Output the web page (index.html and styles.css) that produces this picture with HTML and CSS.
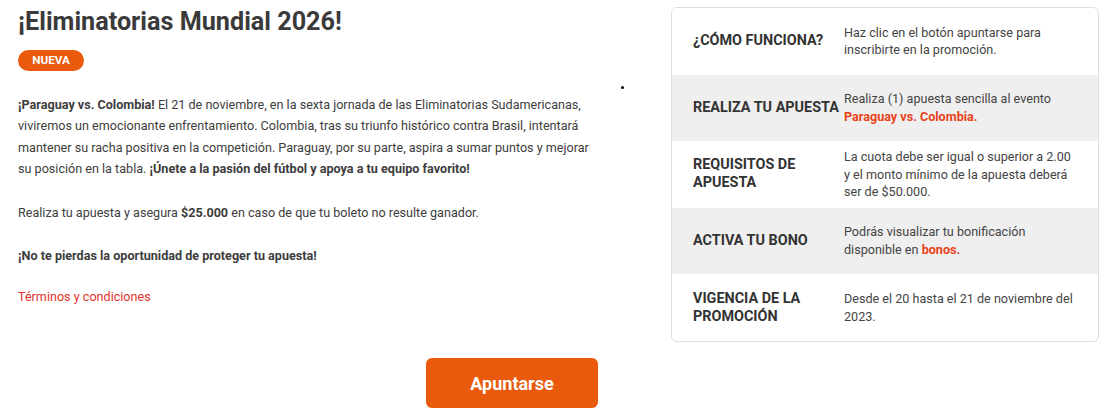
FILE: index.html
```html
<!DOCTYPE html>
<html lang="es">
<head>
<meta charset="utf-8">
<title>¡Eliminatorias Mundial 2026!</title>
<link rel="stylesheet" href="styles.css">
</head>
<body>
<div class="page">
  <div class="top">
    <section class="main">
      <h1 class="title">¡Eliminatorias Mundial 2026!</h1>
      <span class="badge">NUEVA</span>
      <p class="text first"><strong>¡Paraguay vs. Colombia!</strong> El 21 de noviembre, en la sexta jornada de las Eliminatorias Sudamericanas, viviremos un emocionante enfrentamiento. Colombia, tras su triunfo histórico contra Brasil, intentará mantener su racha positiva en la competición. Paraguay, por su parte, aspira a sumar puntos y mejorar su posición en la tabla. <strong>¡Únete a la pasión del fútbol y apoya a tu equipo favorito!</strong></p>
      <p class="text">Realiza tu apuesta y asegura <strong>$25.000</strong> en caso de que tu boleto no resulte ganador.</p>
      <p class="text"><strong>¡No te pierdas la oportunidad de proteger tu apuesta!</strong></p>
      <a class="terms" href="#">Términos y condiciones</a>
    </section>
    <div class="dot-col"><span class="dot"></span></div>
    <aside class="card">
      <div class="row">
        <div class="label">¿Cómo funciona?</div>
        <div class="value">Haz clic en el botón apuntarse para inscribirte en la promoción.</div>
      </div>
      <div class="row alt">
        <div class="label">Realiza tu apuesta</div>
        <div class="value">Realiza (1) apuesta sencilla al evento <strong class="hl">Paraguay vs. Colombia.</strong></div>
      </div>
      <div class="row">
        <div class="label">Requisitos de apuesta</div>
        <div class="value">La cuota debe ser igual o superior a 2.00 y el monto mínimo de la apuesta deberá ser de $50.000.</div>
      </div>
      <div class="row alt">
        <div class="label">Activa tu bono</div>
        <div class="value">Podrás visualizar tu bonificación disponible en <strong class="hl">bonos.</strong></div>
      </div>
      <div class="row">
        <div class="label">Vigencia de la promoción</div>
        <div class="value">Desde el 20 hasta el 21 de noviembre del 2023.</div>
      </div>
    </aside>
  </div>
  <div class="actions">
    <button class="cta" type="button">Apuntarse</button>
  </div>
</div>
</body>
</html>
```

FILE: styles.css
```css
* { box-sizing: border-box; }
html, body { margin: 0; padding: 0; background: #fff; }
body {
  font-family: Roboto, "Liberation Sans", Arial, sans-serif;
  color: #3d3d3d;
}
.page { width: 1115px; }
.top {
  display: flex;
  align-items: flex-start;
  padding-top: 7px;
}
.main {
  width: 582px;
  margin-left: 18px;
}
.title {
  margin: 0;
  font-size: 25.2px;
  line-height: 30px;
  font-weight: 700;
  color: #3a3a3a;
}
.badge {
  display: inline-block;
  margin-top: 13px;
  width: 66px;
  height: 21px;
  border-radius: 11px;
  background: #e95a0c;
  color: #fff;
  font-size: 11.7px;
  font-weight: 700;
  line-height: 21px;
  text-align: center;
}
.text {
  margin: 22px 0 0;
  font-size: 12.6px;
  line-height: 21.4px;
}
.text.first { margin-top: 23px; }
.text strong { font-weight: 700; }
.terms {
  display: block;
  margin-top: 20px;
  font-size: 12.6px;
  line-height: 21.4px;
  color: #e5322d;
  text-decoration: none;
}
.dot-col {
  width: 71px;
  padding-left: 21px;
  padding-top: 79px;
}
.dot {
  display: block;
  width: 3px;
  height: 3px;
  border-radius: 50%;
  background: #000;
}
.card {
  width: 428px;
  height: 335px;
  border: 1px solid #dedede;
  border-radius: 6px;
  overflow: hidden;
  display: flex;
  flex-direction: column;
}
.row {
  flex: 1;
  display: grid;
  grid-template-columns: 151px 1fr;
  align-items: center;
  padding: 0 20px 0 21px;
  line-height: 17.6px;
}
.row.alt { background: #efefef; }
.label {
  font-size: 14.4px;
  line-height: 18px;
  font-weight: 700;
  text-transform: uppercase;
  color: #333;
}
.value { color: #444; font-size: 12.6px; }
.hl { color: #e8431a; font-weight: 700; }
.actions {
  padding-left: 426px;
  padding-top: 16px;
}
.cta {
  width: 172px;
  height: 50px;
  border: 0;
  border-radius: 6px;
  background: #e95a0c;
  color: #fff;
  font-family: Roboto, "Liberation Sans", Arial, sans-serif;
  font-size: 18px;
  font-weight: 700;
  cursor: pointer;
}
```
